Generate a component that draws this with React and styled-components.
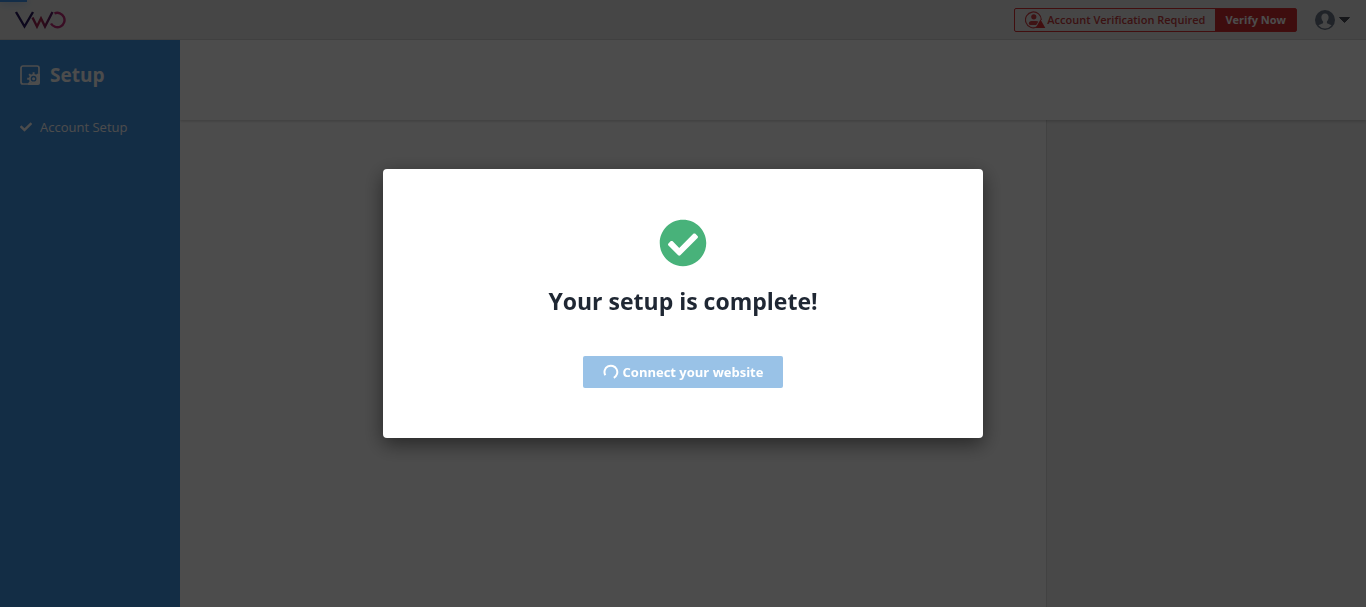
import React from "react";
import styled, { createGlobalStyle } from "styled-components";
import { FaCheck, FaCheckCircle } from "react-icons/fa";

const GlobalStyle = createGlobalStyle`
  *, *::before, *::after { box-sizing: border-box; }
  body {
    margin: 0;
    background: #ffffff;
    font-family: "Open Sans", "Noto Sans", sans-serif;
    font-size: 13px;
    line-height: 20px;
  }
  h1, h2 { margin: 0; }
  button { font-family: inherit; border: 0; padding: 0; }
`;

const Page = styled.div`
  display: flex;
  flex-direction: column;
  min-height: 100vh;
`;

const Progress = styled.div`
  position: absolute;
  top: 0;
  left: 0;
  width: 2%;
  height: 2px;
  background: #4296f0;
  box-shadow: 0 0 10px #4296f0;
`;

const TopBar = styled.header`
  display: flex;
  align-items: center;
  justify-content: space-between;
  height: 40px;
  padding: 0 15px 0 14px;
  background: #ececec;
  border-bottom: 1px solid #d6d6d6;
`;

const HomeLink = styled.a`
  display: flex;
`;

const TopActions = styled.div`
  display: flex;
  align-items: center;
  gap: 18px;
`;

const Verification = styled.div`
  display: flex;
  height: 24px;
  border: 1px solid #d92f34;
  border-radius: 2px;
  font-size: 11px;
`;

const VerificationLabel = styled.span`
  display: flex;
  align-items: center;
  gap: 1px;
  padding: 0 10px;
  font-weight: 600;
  color: #c63c40;
`;

const VerifyButton = styled.button`
  padding: 0 10px;
  background: #d02c31;
  color: #ffffff;
  font-size: 11px;
  font-weight: 700;
`;

const AccountButton = styled.button`
  display: flex;
  align-items: center;
  gap: 3px;
  background: none;
  color: #6b7688;
`;

const Body = styled.div`
  display: flex;
  flex: 1;
`;

const Sidebar = styled.nav`
  flex: 0 0 180px;
  padding: 20px;
  background: #4296e6;
  color: #ffffff;
`;

const SidebarTitle = styled.h1`
  display: flex;
  align-items: center;
  gap: 10px;
  font-size: 19px;
  line-height: 30px;
  font-weight: 700;
`;

const Step = styled.a`
  display: flex;
  align-items: center;
  gap: 8px;
  margin-top: 27px;
  color: inherit;
  text-decoration: none;
`;

const Main = styled.main`
  display: flex;
  flex-direction: column;
  flex: 1;
  overflow: hidden;
`;

const MainHeader = styled.div`
  position: relative;
  height: 80px;
  background: #ffffff;
  box-shadow: 0 1px 3px rgba(0, 0, 0, 0.2);
`;

const Columns = styled.div`
  display: flex;
  flex: 1;
`;

const Content = styled.section`
  flex: 1;
`;

const HelpPanel = styled.aside`
  flex: 0 0 320px;
  background: #f0f0f0;
  border-left: 1px solid #dcdcdc;
`;

const Overlay = styled.div`
  position: fixed;
  inset: 0;
  display: flex;
  align-items: center;
  justify-content: center;
  background: rgba(0, 0, 0, 0.7);
`;

const Dialog = styled.div`
  display: flex;
  flex-direction: column;
  align-items: center;
  width: 600px;
  max-width: 100%;
  padding: 50px;
  background: #ffffff;
  border-radius: 4px;
  box-shadow: 0 6px 20px rgba(0, 0, 0, 0.5);
`;

const DialogTitle = styled.h2`
  margin: 17px 0 38px;
  font-size: 23px;
  line-height: 34px;
  font-weight: 700;
  color: #1f2733;
`;

const ConnectButton = styled.button`
  display: flex;
  align-items: center;
  gap: 4px;
  height: 32px;
  padding: 0 20px;
  background: #99c2e7;
  border-radius: 2px;
  color: #ffffff;
  font-size: 13px;
  font-weight: 700;
`;

const Logo = () => (
  <svg width="53" height="18" viewBox="0 0 53 18" fill="none" strokeWidth="2.4" role="img" aria-label="VWO">
    <defs>
      <linearGradient id="logoFade" x1="17" y1="0" x2="36" y2="0" gradientUnits="userSpaceOnUse">
        <stop offset="0" stopColor="#8c1d55" />
        <stop offset="0.5" stopColor="#b02a50" />
        <stop offset="1" stopColor="#5c1f68" />
      </linearGradient>
    </defs>
    <path d="M2 1 10.500 15.500 19 1" stroke="#2a1a60" />
    <path d="M18.500 6.500 23 15.500 27 7.500 31 15.500 38.500 1" stroke="url(#logoFade)" />
    <path d="M40.500 2.400A7.200 7.200 0 1 1 37 12.500" stroke="#c02d78" />
  </svg>
);

const AccountAlertIcon = () => (
  <svg width="21" height="18" viewBox="0 0 21 18" aria-hidden="true">
    <path d="M16.300 9A7.900 7.900 0 1 0 12.200 15.800" fill="none" stroke="#d04044" strokeWidth="1.200" />
    <circle cx="8.800" cy="5.800" r="2.600" fill="#d04044" />
    <path d="M3.800 12.700Q4 10 6.500 10H11Q13 10 13.300 10.800L11.200 14H4.700Z" fill="#d04044" />
    <path d="M15.500 8.600 20.300 17H10.700Z" fill="#d92f34" />
  </svg>
);

const AvatarIcon = () => (
  <svg width="20" height="20" viewBox="0 0 20 20" aria-hidden="true">
    <circle cx="10" cy="10" r="10" fill="currentColor" />
    <path
      d="M10 3.400c-2.500 0-3.700 1.800-3.600 4 .1 1.700.8 3 1.700 4v1.700c0 .9-3.800 1.200-4.600 2.500A8.600 8.600 0 0 0 10 18.500a8.600 8.600 0 0 0 6.500-2.900c-.8-1.300-4.600-1.600-4.600-2.500v-1.700c.9-1 1.600-2.300 1.700-4 .1-2.200-1.100-4-3.600-4Z"
      fill="#ececec"
    />
  </svg>
);

const SetupIcon = () => (
  <svg width="20" height="20" viewBox="0 0 20 20" fill="none" stroke="currentColor" aria-hidden="true">
    <path d="M8 19H3a2 2 0 0 1-2-2V3a2 2 0 0 1 2-2h14a2 2 0 0 1 2 2v7" strokeWidth="1.700" />
    <path d="M17 9h3v9a2 2 0 0 1-2 2H8v-2l5-0.500A4 4 0 0 0 17.500 13Z" fill="currentColor" stroke="none" />
    <circle cx="13.600" cy="13.700" r="3.800" strokeWidth="1.800" />
    <circle cx="13.600" cy="13.700" r="1.500" fill="currentColor" stroke="none" />
    <path
      d="M13.600 7.300v2.500M7.200 13.700h2.500M9.100 9.200l1.800 1.800M18.100 9.200l-1.800 1.800M9.100 18.200l1.800-1.800"
      strokeWidth="1.900"
    />
  </svg>
);

const SpinnerIcon = () => (
  <svg width="16" height="16" viewBox="0 0 16 16" fill="none" stroke="currentColor" strokeWidth="2" aria-hidden="true">
    <path d="M2.300 11.200A6.400 6.400 0 1 1 10.800 13.800" />
  </svg>
);

const CaretIcon = () => (
  <svg width="13" height="8" viewBox="0 0 13 8" aria-hidden="true">
    <path d="M1.500 1.500h10L6.500 6.500Z" fill="#4a4f58" stroke="#4a4f58" strokeLinejoin="round" />
  </svg>
);

export default function App() {
  return (
    <>
      <GlobalStyle />
      <Page>
        <Progress />
        <TopBar>
          <HomeLink href="#">
            <Logo />
          </HomeLink>
          <TopActions>
            <Verification>
              <VerificationLabel>
                <AccountAlertIcon />
                Account Verification Required
              </VerificationLabel>
              <VerifyButton type="button">Verify Now</VerifyButton>
            </Verification>
            <AccountButton type="button" aria-label="Account menu">
              <AvatarIcon />
              <CaretIcon />
            </AccountButton>
          </TopActions>
        </TopBar>
        <Body>
          <Sidebar>
            <SidebarTitle>
              <SetupIcon />
              Setup
            </SidebarTitle>
            <Step href="#account-setup">
              <FaCheck size={12} />
              Account Setup
            </Step>
          </Sidebar>
          <Main>
            <MainHeader />
            <Columns>
              <Content />
              <HelpPanel />
            </Columns>
          </Main>
        </Body>
      </Page>
      <Overlay>
        <Dialog role="dialog" aria-modal="true" aria-labelledby="dialog-title">
          <FaCheckCircle size={48} color="#48b27a" />
          <DialogTitle id="dialog-title">Your setup is complete!</DialogTitle>
          <ConnectButton type="button">
            <SpinnerIcon />
            Connect your website
          </ConnectButton>
        </Dialog>
      </Overlay>
    </>
  );
}
